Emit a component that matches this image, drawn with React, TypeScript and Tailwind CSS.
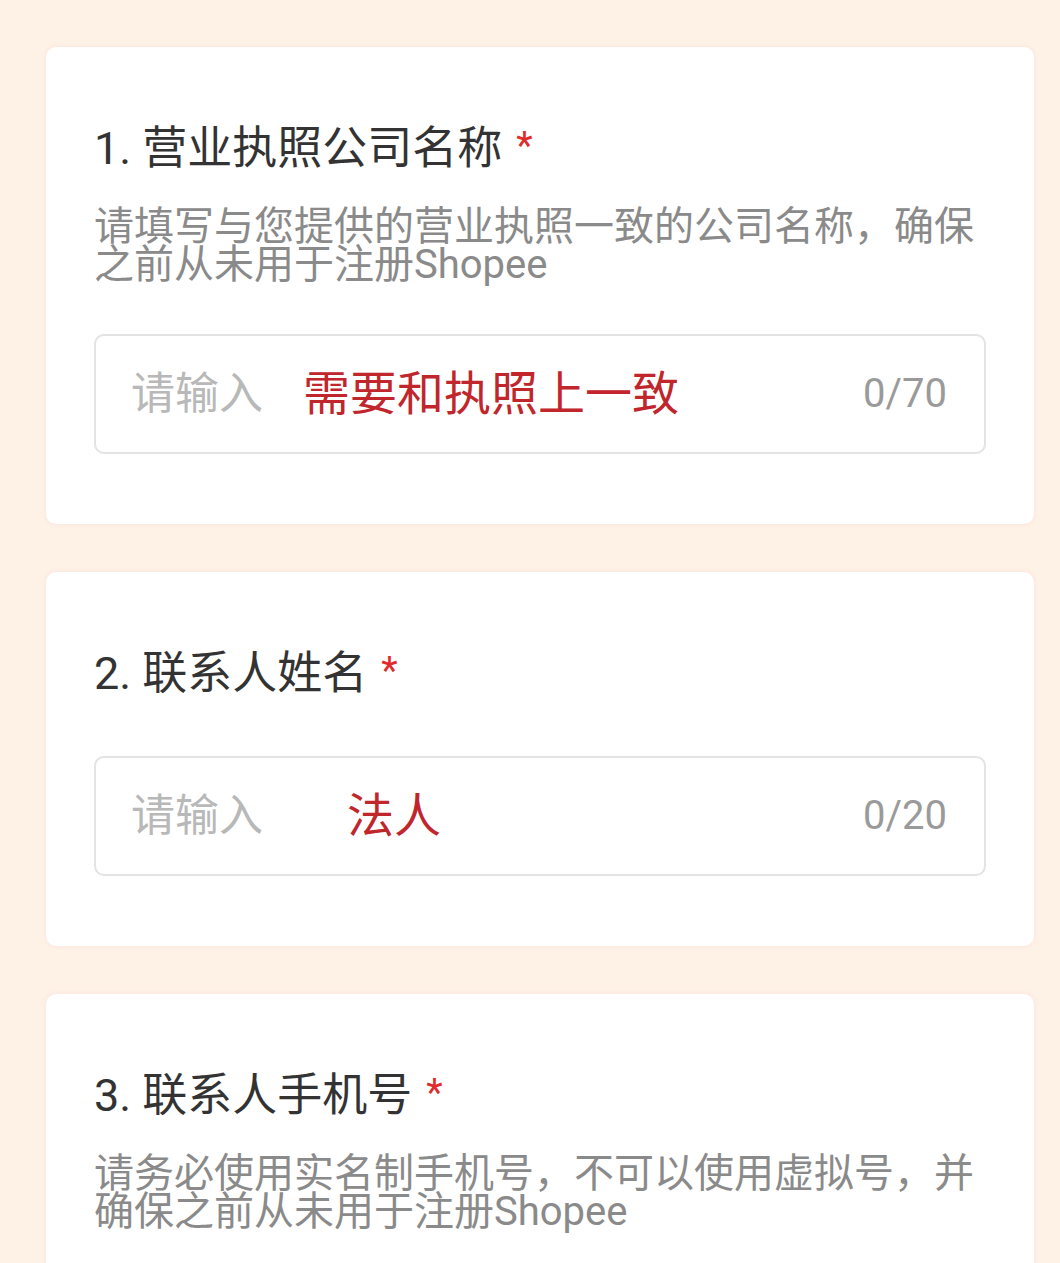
const font = { fontFamily: 'Roboto, "Noto Sans CJK SC", sans-serif' };

interface FieldProps {
  no: number;
  title: string;
  desc?: string;
  hint: string;
  hintOffset: string;
  max: number;
  last?: boolean;
}

function Field({ no, title, desc, hint, hintOffset, max, last }: FieldProps) {
  return (
    <div
      className={`rounded-[10px] bg-white px-[48px] pt-[74px] shadow-[0_0_4px_rgba(240,200,200,0.35)] ${
        last ? 'pb-[80px]' : 'pb-[70px]'
      }`}
    >
      <div className="flex items-start text-[45px] leading-[56px] text-[#333333]">
        <span>
          {no}. {title}
        </span>
        <span className="ml-[14px] text-[38px] leading-[50px] text-[#e12a2a]">*</span>
      </div>
      {desc && (
        <p className="mt-[31px] text-[40px] leading-[38px] text-[#8a8a8a]">{desc}</p>
      )}
      {!last && (
        <div
          className={`flex h-[120px] items-center rounded-[10px] border-2 border-[#e3e3e3] pl-[35px] pr-[37px] ${
            desc ? 'mt-[50px]' : 'mt-[54px]'
          }`}
        >
          <span className="text-[44px] text-[#b8b8b8]">请输入</span>
          <span className={`${hintOffset} text-[47px] text-[#c0262b]`}>{hint}</span>
          <span className="ml-auto text-[40px] text-[#9a9a9a]">0/{max}</span>
        </div>
      )}
    </div>
  );
}

export default function App() {
  return (
    <div className="h-[1263px] overflow-hidden bg-[#fef1e6] pl-[46px] pr-[26px] pt-[47px]" style={font}>
      <div className="flex flex-col gap-[48px]">
        <Field
          no={1}
          title="营业执照公司名称"
          desc="请填写与您提供的营业执照一致的公司名称，确保之前从未用于注册Shopee"
          hint="需要和执照上一致"
          hintOffset="ml-[40px]"
          max={70}
        />
        <Field no={2} title="联系人姓名" hint="法人" hintOffset="ml-[84px]" max={20} />
        <Field
          no={3}
          title="联系人手机号"
          desc="请务必使用实名制手机号，不可以使用虚拟号，并确保之前从未用于注册Shopee"
          hint=""
          hintOffset=""
          max={11}
          last
        />
      </div>
    </div>
  );
}
